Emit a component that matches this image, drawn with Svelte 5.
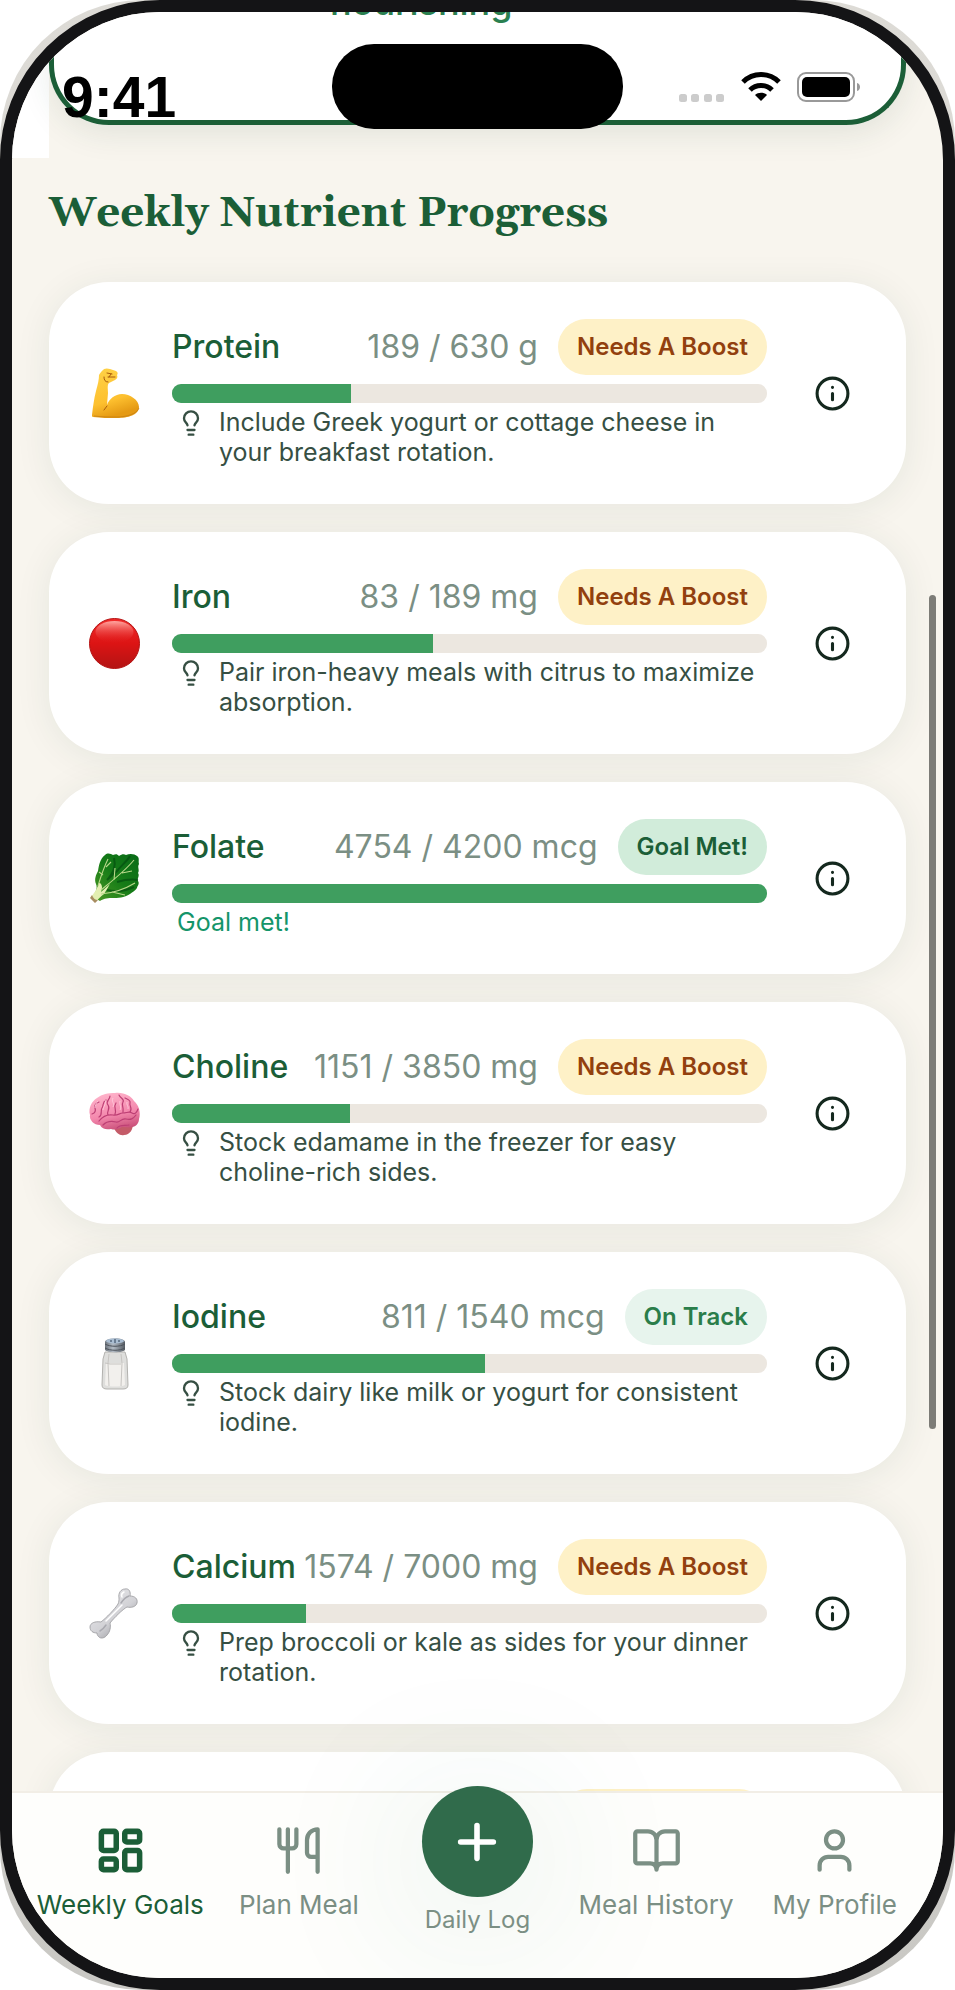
<script lang="ts">
  type Status = 'boost' | 'track' | 'met'
  type Nutrient = {
    id: string
    name: string
    value: number
    goal: number
    unit: string
    status: Status
    tip?: string
  }

  const labels: Record<Status, string> = {
    boost: 'Needs A Boost',
    track: 'On Track',
    met: 'Goal Met!',
  }

  const nutrients: Nutrient[] = [
    { id: 'protein', name: 'Protein', value: 189, goal: 630, unit: 'g', status: 'boost', tip: 'Include Greek yogurt or cottage cheese in your breakfast rotation.' },
    { id: 'iron', name: 'Iron', value: 83, goal: 189, unit: 'mg', status: 'boost', tip: 'Pair iron-heavy meals with citrus to maximize absorption.' },
    { id: 'folate', name: 'Folate', value: 4754, goal: 4200, unit: 'mcg', status: 'met' },
    { id: 'choline', name: 'Choline', value: 1151, goal: 3850, unit: 'mg', status: 'boost', tip: 'Stock edamame in the freezer for easy choline-rich sides.' },
    { id: 'iodine', name: 'Iodine', value: 811, goal: 1540, unit: 'mcg', status: 'track', tip: 'Stock dairy like milk or yogurt for consistent iodine.' },
    { id: 'calcium', name: 'Calcium', value: 1574, goal: 7000, unit: 'mg', status: 'boost', tip: 'Prep broccoli or kale as sides for your dinner rotation.' },
  ]

  const percent = (n: Nutrient) => Math.min(100, (n.value / n.goal) * 100)
</script>

{#snippet picture(id: string)}
  <svg class="picture" viewBox="0 0 51 51" aria-hidden="true">
    {#if id === 'protein'}
      <defs>
        <linearGradient id="arm" x1="0" y1="0" x2="0.3" y2="1">
          <stop offset="0" stop-color="#ffd348" /><stop offset="0.7" stop-color="#fdc02f" /><stop offset="1" stop-color="#e59a14" />
        </linearGradient>
      </defs>
      <path d="M13 3C15 0 18 0 21 1l6 2c2 1 2 3 1 4 1 2 0 4-2 5-2 1-4 2-6 3-2 2-1 6-1 10l-1 12c2-6 8-11 15-11 8 0 17 6 17 13 0 8-11 11-22 11-9 0-16 0-24-1-1 0-1-1-1-2 1-9 2-16 4-24 2-7 3-12 3-16 1-2 2-3 3-4z" fill="url(#arm)" />
      <path d="M18 38l-3 4M19 14c-3 0-4-2-4-5M18 5l5 1M19 9h7M22 6l-2 3" fill="none" stroke="#a85b0c" stroke-width="1" stroke-linecap="round" />
      <path d="M5 48c8 1 16 1 23 1 9 0 20-3 22-9" fill="none" stroke="#bd7610" stroke-width="1" opacity="0.6" />
    {:else if id === 'iron'}
      <defs>
        <linearGradient id="disc" x1="0" y1="0" x2="0" y2="1">
          <stop offset="0" stop-color="#f22a2a" /><stop offset="0.5" stop-color="#dc1414" /><stop offset="1" stop-color="#b31414" />
        </linearGradient>
        <linearGradient id="gloss" x1="0" y1="0" x2="0" y2="1">
          <stop offset="0" stop-color="#ffa6a0" /><stop offset="1" stop-color="#e01b1b" stop-opacity="0" />
        </linearGradient>
      </defs>
      <circle cx="25.5" cy="25.5" r="25" fill="url(#disc)" stroke="#b51212" />
      <ellipse cx="25.5" cy="14" rx="19" ry="11" fill="url(#gloss)" />
    {:else if id === 'folate'}
      <defs>
        <linearGradient id="leaf" x1="0" y1="1" x2="1" y2="0">
          <stop offset="0" stop-color="#4d9a25" /><stop offset="0.5" stop-color="#167c17" /><stop offset="1" stop-color="#086a17" />
        </linearGradient>
      </defs>
      <path d="M16 2c3-3 6-1 8 0 3-1 4-1 6 1 3-2 5-2 7-1 4-2 9-1 11 1 3 2 1 5 2 8-2 3 1 6-1 9 2 3-1 5 0 8 2 3-1 5-1 7-2 3-5 4-7 6-6 4-12 4-18 4-6 0-9 1-12 3l-7-4c2-5 5-8 3-13-2-5 0-9 2-13 1-6 2-12 7-16z" fill="url(#leaf)" />
      <path d="M25 5c2 8 0 14-7 22l10-9c5-6 11-11 13-15M28 29c7-2 14-3 21-2M18 37c8 2 18 1 27-3" fill="none" stroke="#034b10" stroke-width="2" opacity="0.65" />
      <path d="M2 44c4-5 6-8 8-14 2 0 3 2 3 5l-1 4 9-8-6 10c-3 2-6 5-8 8z" fill="#e3efb2" />
      <path d="M9 33c3-10 6-19 10-27M12 37c11-9 24-19 33-30M12 41c13-1 24-5 34-11M25 27l1-12M33 20l10-2M23 39l13 3M14 22l-4-3M17 14l5-5" fill="none" stroke="#b8d78a" stroke-width="1.1" />
      <path d="M1 45l2-3c1 3 3 5 6 5l-3 3z" fill="#a88d62" />
    {:else if id === 'choline'}
      <defs>
        <linearGradient id="brain" x1="0.3" y1="0" x2="0.6" y2="1">
          <stop offset="0" stop-color="#ffb4cb" /><stop offset="0.6" stop-color="#f387ac" /><stop offset="1" stop-color="#c95079" />
        </linearGradient>
      </defs>
      <path d="M25 40c2 5 6 8 10 7 6 0 9-6 9-11l-8-4z" fill="#c45b68" />
      <path d="M1 27C-1 20 3 13 8 10c5-4 11-5 18-5 9-1 16 3 19 8 5 4 7 12 5 18 0 4-3 8-7 8-4 1-7 0-10 0-4 3-8 3-11 2-5 1-9 0-11-4-6 0-11-5-10-10z" fill="url(#brain)" />
      <path d="M3 26c3-1 4-3 3-6s1-5 4-6M10 29c4-2 1-6 3-9s0-6 4-8M19 27c-2-4 3-6 0-10s2-5 2-9M10 33c4-5 8-7 14-6 5 1 6-2 10-2s6-2 9 0 5-1 6-4M26 26c2-4-2-7 1-11M34 24c1-5-2-7 0-10s-3-4-4-7M41 24c3-4-1-6 0-9s-3-4-5-5M14 37c4-4 9-4 13-3s5-4 10-3 7 0 10-4M28 40c3-4 8-2 12-3" fill="none" stroke="#bd3f74" stroke-width="1.2" stroke-linecap="round" />
      <path d="M9 13c-2 2-3 5-3 7M16 12c2 3-2 7-2 10M24 10c-2 4 2 5 0 9M31 13c-1 4 2 6 0 9M38 14c-1 3 2 4 1 7" fill="none" stroke="#ffd0de" stroke-width="1" opacity="0.8" />
    {:else if id === 'iodine'}
      <defs>
        <linearGradient id="cap" x1="0" y1="0" x2="1" y2="0">
          <stop offset="0" stop-color="#6c737b" /><stop offset="0.4" stop-color="#b2bbc5" /><stop offset="1" stop-color="#555b62" />
        </linearGradient>
      </defs>
      <path d="M16 14h20l2 7 1 26c0 3-2 4-5 4H18c-3 0-5-1-5-4l1-26z" fill="#dededc" stroke="#b3b2af" />
      <path d="M17 25h18l1 22c-4 2-16 2-20 0z" fill="#f2f0ed" />
      <path d="M20 16l-1 9 1 23M32 16l1 9-1 23M16 25l5 1h11" fill="none" stroke="#c6c4c1" stroke-width="1" />
      <path d="M16 4c1-5 19-5 20 0v8c-3 3-17 3-20 0z" fill="url(#cap)" />
      <ellipse cx="26" cy="3" rx="9" ry="2.500" fill="#a9bdd2" />
      <path d="M16 6c5 3 15 3 20 0M16 10c5 3 15 3 20 0" fill="none" stroke="#4d535b" stroke-width="1" />
      <path d="M21 3h2M25 2h2M29 3h2M25 4h2" stroke="#2f4055" />
    {:else}
      <defs>
        <linearGradient id="bone" x1="0" y1="0" x2="0.8" y2="1">
          <stop offset="0" stop-color="#f0f0f3" /><stop offset="0.6" stop-color="#d2d2d6" /><stop offset="1" stop-color="#8c8c92" />
        </linearGradient>
      </defs>
      <path d="M30 10c-1-5 2-9 6-9 4-1 6 3 5 7 5 0 8 3 7 7-1 4-6 5-10 4-4 2-13 11-17 16 1 4 0 9-3 12-2 3-6 4-8 2-1-1-2-2-2-4-4 0-7-2-7-6 0-4 5-6 11-5 5-4 14-13 17-18 1-2 1-4 1-6z" fill="url(#bone)" stroke="#98989c" stroke-width="0.800" />
      <path d="M32 15c2-3 5-6 8-7M11 43c2-1 4-3 6-6" fill="none" stroke="#aaaab0" stroke-width="1.5" stroke-linecap="round" />
      <path d="M17 33l16-16M35 4c-2 1-3 3-2 5" fill="none" stroke="#fff" stroke-width="1.5" stroke-linecap="round" />
    {/if}
  </svg>
{/snippet}

<div class="case">
  <div class="device">
    <main class="screen">
      <section class="hero"><p>nourishing</p></section>

      <h1>Weekly Nutrient Progress</h1>

      <ul class="cards">
        {#each nutrients as n (n.id)}
          <li class="card">
            {@render picture(n.id)}
            <div class="info">
              <div class="top">
                <h2>{n.name}</h2>
                <span class="amount">{n.value} / {n.goal} {n.unit}</span>
                <span class="badge {n.status}">{labels[n.status]}</span>
              </div>
              <div class="bar" role="progressbar" aria-label={n.name} aria-valuenow={n.value} aria-valuemin="0" aria-valuemax={n.goal}>
                <div class="fill" style="width: {percent(n)}%"></div>
              </div>
              {#if n.tip}
                <p class="tip">
                  <svg class="bulb" viewBox="0 0 24 24" aria-hidden="true"><path d="M15 14c.2-1 .7-1.700 1.500-2.500 1-.9 1.500-2.200 1.500-3.500A6 6 0 0 0 6 8c0 1 .2 2.200 1.500 3.500.7.7 1.300 1.500 1.500 2.500M9 18h6M10 22h4" /></svg>
                  <span>{n.tip}</span>
                </p>
              {:else}
                <p class="tip done">Goal met!</p>
              {/if}
            </div>
            <button class="more" type="button" aria-label="About {n.name}">
              <svg viewBox="0 0 24 24"><circle cx="12" cy="12" r="10" /><path d="M12 16v-4M12 8h.01" /></svg>
            </button>
          </li>
        {/each}
        <li class="card next" aria-hidden="true"><span class="badge boost"></span></li>
      </ul>
    </main>

    <nav>
      <a class="active" href="#goals" aria-current="page">
        <svg viewBox="0 0 24 24"><rect x="3" y="3" width="7" height="9" rx="1" /><rect x="14" y="3" width="7" height="5" rx="1" /><rect x="14" y="12" width="7" height="9" rx="1" /><rect x="3" y="16" width="7" height="5" rx="1" /></svg>
        <span>Weekly Goals</span>
      </a>
      <a href="#plan">
        <svg viewBox="0 0 24 24"><path d="M3 2v7c0 1.100.9 2 2 2h4a2 2 0 0 0 2-2V2M7 2v20M21 15V2a5 5 0 0 0-5 5v6c0 1.100.9 2 2 2h3Zm0 0v7" /></svg>
        <span>Plan Meal</span>
      </a>
      <a class="log" href="#log">
        <span class="fab"><svg viewBox="0 0 24 24"><path d="M5 12h14M12 5v14" /></svg></span>
        <span>Daily Log</span>
      </a>
      <a href="#history">
        <svg viewBox="0 0 24 24"><path d="M12 7v14M3 18a1 1 0 0 1-1-1V4a1 1 0 0 1 1-1h5a4 4 0 0 1 4 4 4 4 0 0 1 4-4h5a1 1 0 0 1 1 1v13a1 1 0 0 1-1 1h-6a3 3 0 0 0-3 3 3 3 0 0 0-3-3z" /></svg>
        <span>Meal History</span>
      </a>
      <a href="#profile">
        <svg viewBox="0 0 24 24"><path d="M19 21v-2a4 4 0 0 0-4-4H9a4 4 0 0 0-4 4v2" /><circle cx="12" cy="7" r="4" /></svg>
        <span>My Profile</span>
      </a>
    </nav>

    <!-- system chrome floating over the page -->
    <div class="status">
      <time>9:41</time>
      <div class="island"></div>
      <div class="signals">
        <svg class="dots" viewBox="0 0 46 8" aria-hidden="true">
          {#each [0, 12, 25, 37] as x}
            <rect {x} width="8" height="8" rx="2.500" />
          {/each}
        </svg>
        <svg class="wifi" viewBox="0 0 40 30" aria-hidden="true">
          <path d="M20 29l-6-6c3-3 9-3 12 0z" />
          <path d="M9 18c6-6 16-6 22 0M2 10c10-10 26-10 36 0" fill="none" stroke="#000" stroke-width="5" />
        </svg>
        <svg class="battery" viewBox="0 0 64 30" aria-hidden="true">
          <rect x="1" y="1" width="56" height="28" rx="8" fill="none" stroke="#999" stroke-width="2" />
          <rect x="5" y="5" width="48" height="20" rx="5" />
          <path d="M60 11c4 1 4 7 0 8z" fill="#999" />
        </svg>
      </div>
    </div>
    <div class="scrollbar"></div>
  </div>
</div>

<style>
  :global(body) { margin: 0; background: #fff; }
  .case {
    height: 100vh;
    border-radius: 142px;
    background: linear-gradient(#dddbd6, #c9c8c4);
    font-family: Inter, "Liberation Sans", sans-serif;
  }
  .device {
    position: relative;
    box-sizing: border-box;
    height: 100%;
    display: flex;
    flex-direction: column;
    overflow: hidden;
    border: 12px solid #141416;
    border-radius: 160px;
    background: #f8f5ee;
  }
  .screen {
    flex: 1;
    min-height: 0;
    overflow: hidden;
    padding: 0 37px;
    background: linear-gradient(#fff, #fff) 0 0 / 37px 146px no-repeat;
  }
  .hero {
    display: flow-root;
    box-sizing: border-box;
    height: 113px;
    padding-left: 276px;
    border: 5px solid #1b5e37;
    border-top: 0;
    border-radius: 0 0 60px 60px;
    background: #fff;
    box-shadow: 0 8px 32px rgba(27, 67, 50, 0.1);
  }
  .hero p {
    margin: -34px 0 0;
    font-size: 36px;
    font-weight: 500;
    line-height: 48px;
    color: #2a8050;
  }
  h1 {
    margin: 63px 0 42px;
    font-family: Georgia, Gelasio, "Liberation Serif", serif;
    font-size: 42px;
    line-height: 52px;
    color: #1b5e37;
  }
  .cards {
    display: flex;
    flex-direction: column;
    gap: 28px;
    margin: 0;
    padding: 0;
    list-style: none;
  }
  .card {
    display: grid;
    grid-template-columns: 51px 1fr 67px;
    gap: 32px;
    align-items: center;
    padding: 37px 40px;
    border-radius: 60px;
    background: #fff;
    box-shadow: 0 4px 36px rgba(27, 67, 50, 0.08);
  }
  .picture { width: 51px; height: 51px; overflow: visible; }
  .info { min-width: 0; }
  .top { display: flex; align-items: center; gap: 20px; white-space: nowrap; }
  h2 { margin: 0; font-size: 32px; font-weight: 500; line-height: 40px; color: #1b5e37; }
  .amount { flex: 1; margin-left: -20px; font-size: 32px; line-height: 40px; text-align: right; color: #7b8f84; }
  .badge {
    padding: 0 19px;
    border-radius: 28px;
    font-size: 24px;
    font-weight: 600;
    line-height: 56px;
  }
  .boost { background: #fef1c7; color: #92400e; }
  .track { background: #e7f4ed; color: #2a7d4a; }
  .met { background: #d1ecda; color: #1b5e37; }
  .bar { height: 19px; margin: 9px 0 4px; border-radius: 9px; overflow: hidden; background: #ece7e0; }
  .fill { height: 100%; background: #3f9e5f; }
  .tip {
    display: flex;
    gap: 14px;
    margin: 0;
    padding-left: 5px;
    font-size: 25px;
    line-height: 30px;
    color: #364f43;
  }
  .done { color: #14956a; }
  svg { fill: none; }
  .bulb, .more svg, nav svg { stroke: currentColor; stroke-width: 2; stroke-linecap: round; stroke-linejoin: round; }
  .bulb { flex: none; width: 28px; height: 28px; margin-top: 2px; }
  .more { display: grid; place-items: center; height: 67px; padding: 0; border: 0; background: none; color: #14281e; }
  .more svg { width: 37px; height: 37px; }
  .next { display: flex; justify-content: flex-end; padding-right: 139px; }
  .next .badge { width: 170px; height: 56px; }
  nav {
    position: relative;
    display: grid;
    grid-template-columns: repeat(5, 1fr);
    align-items: start;
    box-sizing: border-box;
    height: 187px;
    padding: 32px 19px 0;
    border-top: 2px solid #f2eee6;
    background: #fefefc;
  }
  nav a {
    display: flex;
    flex-direction: column;
    align-items: center;
    gap: 14px;
    font-size: 26px;
    line-height: 30px;
    white-space: nowrap;
    text-decoration: none;
    color: #7b8f84;
  }
  nav svg { width: 51px; height: 51px; }
  nav .active { color: #1b5e37; }
  .active svg { stroke-width: 2.6; }
  nav .log { gap: 8px; margin-top: -39px; font-size: 24px; }
  .fab {
    display: grid;
    place-items: center;
    width: 111px;
    height: 111px;
    border-radius: 50%;
    background: #306b4b;
    color: #fff;
    box-shadow: 0 20px 160px rgba(45, 130, 100, 0.18);
  }
  .fab svg { width: 56px; height: 56px; stroke-width: 2.4; }
  .status {
    position: absolute;
    inset: 32px 50px auto;
    display: grid;
    grid-template-columns: 1fr 291px 1fr;
  }
  time { padding-top: 26px; font: bold 57px/54px "Liberation Sans", sans-serif; }
  .island { height: 85px; border-radius: 42px; background: #000; }
  .signals { display: flex; justify-content: flex-end; align-items: center; gap: 16px; padding-right: 32px; }
  .signals svg { flex: none; fill: #000; }
  .signals .dots { width: 46px; height: 8px; margin-top: 22px; fill: #ccc; }
  .wifi { width: 40px; height: 30px; }
  .battery { width: 64px; height: 30px; }
  .scrollbar { position: absolute; top: 583px; right: 7px; width: 7px; height: 834px; border-radius: 4px; background: #7d7c77; }
</style>
